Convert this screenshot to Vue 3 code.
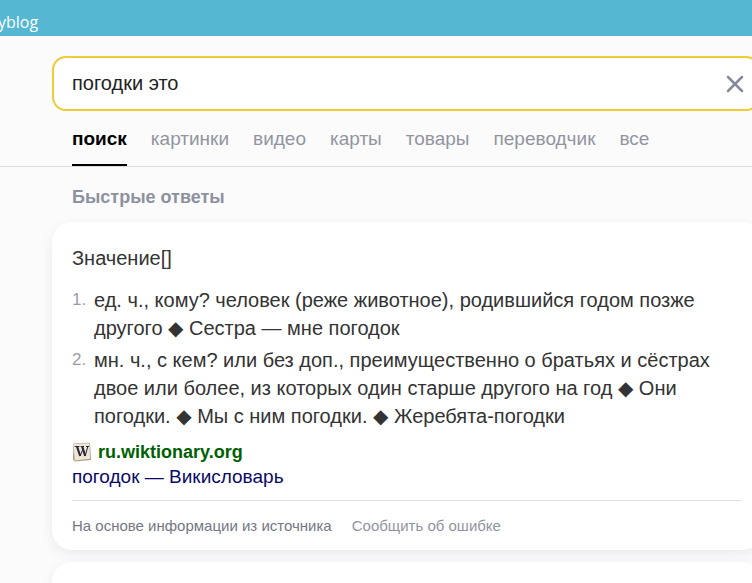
<script setup>
import { ref } from 'vue'

const query = ref('погодки это')
const tabs = ['поиск', 'картинки', 'видео', 'карты', 'товары', 'переводчик', 'все']
const meanings = [
  'ед. ч., кому? человек (реже животное), родившийся годом позже другого ◆ Сестра — мне погодок',
  'мн. ч., с кем? или без доп., преимущественно о братьях и сёстрах двое или более, из которых один старше другого на год ◆ Они погодки. ◆ Мы с ним погодки. ◆ Жеребята-погодки',
]
</script>

<template>
  <div class="page">
    <div class="browser-bar"><span>yblog</span></div>

    <header class="header">
      <form class="search" role="search" @submit.prevent>
        <input v-model="query" class="search-input" type="text" aria-label="Запрос" />
        <button class="clear" type="button" aria-label="Очистить" @click="query = ''">
          <svg width="18" height="18" viewBox="0 0 18 18" aria-hidden="true">
            <path d="M2 2 16 16M16 2 2 16" fill="none" stroke="#858a9e" stroke-width="2.5" stroke-linecap="round" />
          </svg>
        </button>
      </form>
      <nav class="tabs">
        <a v-for="(tab, i) in tabs" :key="tab" href="#" class="tab" :class="{ active: i === 0 }">{{ tab }}</a>
      </nav>
    </header>

    <main class="results">
      <h2 class="section-title">Быстрые ответы</h2>
      <article class="card">
        <p class="lead">Значение[]</p>
        <ol class="meanings">
          <li v-for="(text, i) in meanings" :key="i" class="meaning">
            <span class="number">{{ i + 1 }}.</span>
            <span>{{ text }}</span>
          </li>
        </ol>
        <a class="site" href="#">
          <svg width="20" height="20" viewBox="0 0 20 20" aria-hidden="true">
            <path d="M1.5 1.5 18 .7 19 18 3 19.5 1 17.5Z" fill="#a79c88" />
            <path d="M1.5 2 17.5 1.2 18 16.8 2.8 18.4Z" fill="#f0e6d4" />
            <path d="M2.8 4.5H7.4M8.6 4.5H12M14 4.5H17.2" stroke="#252540" stroke-width="1" />
            <path d="M5 4.5 8.2 14M10.2 4.5 13.2 14" fill="none" stroke="#252540" stroke-width="2.1" />
            <path d="M8.2 14 11 7M13.2 14 15.8 4.5" fill="none" stroke="#252540" stroke-width="1" />
          </svg>
          <span>ru.wiktionary.org</span>
        </a>
        <a class="title" href="#">погодок — Викисловарь</a>
        <footer class="card-footer">
          <span>На основе информации из источника</span>
          <a class="report" href="#">Сообщить об ошибке</a>
        </footer>
      </article>
      <article class="card next"></article>
    </main>
  </div>
</template>

<style>
body {
  background: #fbfbfc;
}
</style>

<style scoped>
.page {
  height: 100vh;
  overflow: hidden;
  background: #fbfbfc;
  color: #333;
  font-family: "Liberation Sans", "DejaVu Sans", sans-serif;
}
.page * {
  box-sizing: border-box;
}
a {
  text-decoration: none;
}
.browser-bar {
  height: 36px;
  padding-top: 10px;
  overflow: hidden;
  background: #56b7d2;
  color: #fff;
  font: 16px/24px "Open Sans", sans-serif;
}
.browser-bar span {
  display: block;
  margin-left: -2px;
}
.header {
  padding: 20px 0 0 52px;
  border-bottom: 1px solid #dcdde1;
}
.search {
  display: flex;
  align-items: center;
  height: 55px;
  margin-right: -8px;
  padding: 0 14px 0 18px;
  border: 2px solid #efcb35;
  border-radius: 14px;
  background: #fff;
}
.search-input {
  flex: 1;
  min-width: 0;
  height: 40px;
  padding: 0;
  border: 0;
  outline: 0;
  background: transparent;
  color: #222;
  font: 20px "Liberation Sans", sans-serif;
}
.clear {
  display: flex;
  padding: 0;
  border: 0;
  background: transparent;
}
.tabs {
  display: flex;
  gap: 24px;
  padding-left: 20px;
}
.tab {
  height: 55px;
  padding-top: 16px;
  color: #92959f;
  font-size: 19px;
  line-height: 24px;
}
.tab.active {
  border-bottom: 2px solid #000;
  color: #000;
  font-weight: bold;
}
.results {
  padding-left: 52px;
}
.section-title {
  margin: 0;
  padding: 18px 20px 13px;
  color: #8e919e;
  font-size: 18px;
  line-height: 24px;
}
.card {
  margin-right: -10px;
  padding: 22px 20px 12px;
  border-radius: 20px;
  background: #fff;
  box-shadow: 0 4px 12px rgba(50, 50, 80, 0.08);
}
.lead {
  margin: 0 0 14px;
  font-size: 20px;
  line-height: 28px;
}
.meanings {
  display: flex;
  flex-direction: column;
  gap: 4px;
  margin: 0;
  padding: 0;
  list-style: none;
}
.meaning {
  display: flex;
  font-size: 20px;
  line-height: 28px;
}
.number {
  flex: 0 0 22px;
  color: #9a9da8;
  font-size: 17px;
}
.site {
  display: flex;
  align-items: center;
  gap: 6px;
  margin-top: 10px;
  color: #006000;
  font-size: 18px;
  font-weight: bold;
  line-height: 24px;
}
.title {
  display: block;
  color: #0a0a66;
  font-size: 19px;
  line-height: 26px;
}
.card-footer {
  display: flex;
  gap: 20px;
  margin-top: 10px;
  padding-top: 13px;
  border-top: 1px solid #e2e2e6;
  color: #747783;
  font-size: 15px;
  line-height: 24px;
}
.report {
  color: #9194a0;
}
.next {
  height: 80px;
  margin-top: 12px;
}
</style>
